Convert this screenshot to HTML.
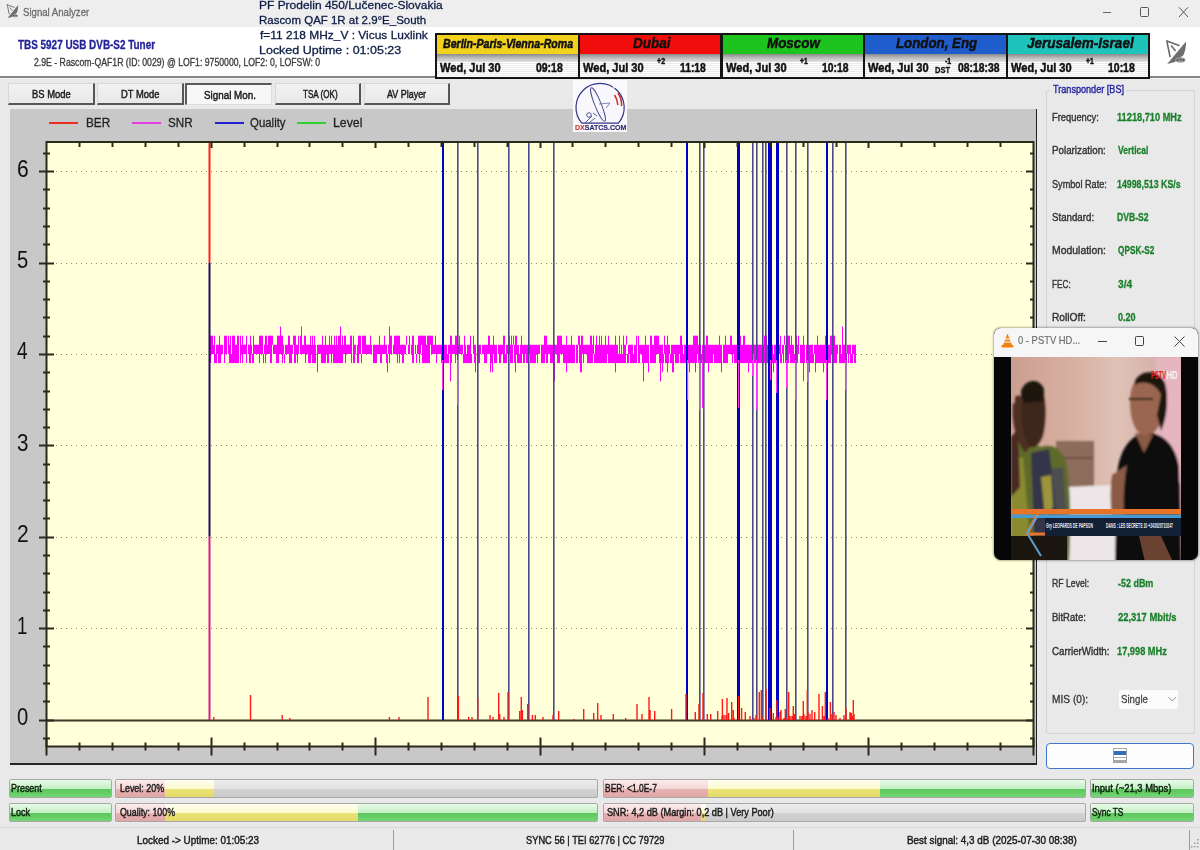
<!DOCTYPE html>
<html><head><meta charset="utf-8"><style>
*{margin:0;padding:0;box-sizing:border-box}
html,body{width:1200px;height:850px;overflow:hidden;background:#e9e9e9;font-family:"Liberation Sans", sans-serif;position:relative}
.t{position:absolute;white-space:nowrap;transform-origin:0 0}
.a{position:absolute}
</style></head><body>

<div class="a" style="left:0;top:0;width:1200px;height:27.5px;background:#eeeeee"></div>
<div class="a" style="left:0;top:27px;width:1200px;height:50px;background:#ffffff"></div>
<div class="a" style="left:0;top:76px;width:1200px;height:2px;background:#858585"></div>
<div class="a" style="left:0;top:78px;width:1200px;height:1px;background:#f6f6f6"></div>
<div class="t" style="left:22.92px;top:6.87px;font-size:11.8px;line-height:11.8px;color:#6a6a6a;font-weight:normal;font-style:normal;transform:scaleX(0.8140);-webkit-text-stroke:0.3px #6a6a6a;">Signal Analyzer</div>
<div class="t" style="left:259.34px;top:-0.43px;font-size:11.8px;line-height:11.8px;color:#0c1c44;font-weight:normal;font-style:normal;transform:scaleX(1.0151);-webkit-text-stroke:0.3px #0c1c44;">PF Prodelin 450/Lučenec-Slovakia</div>
<div class="t" style="left:259.38px;top:14.77px;font-size:11.8px;line-height:11.8px;color:#0c1c44;font-weight:normal;font-style:normal;transform:scaleX(0.9720);-webkit-text-stroke:0.3px #0c1c44;">Rascom QAF 1R at 2.9°E_South</div>
<div class="t" style="left:260.18px;top:29.87px;font-size:11.8px;line-height:11.8px;color:#0c1c44;font-weight:normal;font-style:normal;transform:scaleX(1.0122);-webkit-text-stroke:0.3px #0c1c44;">f=11 218 MHz_V : Vicus Luxlink</div>
<div class="t" style="left:259.30px;top:44.57px;font-size:11.8px;line-height:11.8px;color:#0c1c44;font-weight:normal;font-style:normal;transform:scaleX(1.0580);-webkit-text-stroke:0.3px #0c1c44;">Locked Uptime : 01:05:23</div>
<div class="t" style="left:18.20px;top:39.33px;font-size:12.2px;line-height:12.2px;color:#22229a;font-weight:bold;font-style:normal;transform:scaleX(0.8137);-webkit-text-stroke:0.3px #22229a;">TBS 5927 USB DVB-S2 Tuner</div>
<div class="t" style="left:33.56px;top:57.63px;font-size:10.2px;line-height:10.2px;color:#3a3a3a;font-weight:normal;font-style:normal;transform:scaleX(0.8537);-webkit-text-stroke:0.3px #3a3a3a;">2.9E - Rascom-QAF1R (ID: 0029) @ LOF1: 9750000, LOF2: 0, LOFSW: 0</div>
<div class="a" style="left:10px;top:109px;width:1027px;height:656px;background:#c8c8c8;border-right:1px solid #222;border-bottom:2px solid #262626"></div>
<svg class="a" style="left:0;top:0" width="1200" height="850" viewBox="0 0 1200 850"><rect x="46.5" y="142" width="987.0" height="604.5" fill="#ffffd9"/>
<line x1="56" y1="628.5" x2="1026" y2="628.5" stroke="#8c8c6e" stroke-width="1" stroke-dasharray="1 4"/>
<line x1="56" y1="537.5" x2="1026" y2="537.5" stroke="#8c8c6e" stroke-width="1" stroke-dasharray="1 4"/>
<line x1="56" y1="445.5" x2="1026" y2="445.5" stroke="#8c8c6e" stroke-width="1" stroke-dasharray="1 4"/>
<line x1="56" y1="354.5" x2="1026" y2="354.5" stroke="#8c8c6e" stroke-width="1" stroke-dasharray="1 4"/>
<line x1="56" y1="263.5" x2="1026" y2="263.5" stroke="#8c8c6e" stroke-width="1" stroke-dasharray="1 4"/>
<line x1="56" y1="171.5" x2="1026" y2="171.5" stroke="#8c8c6e" stroke-width="1" stroke-dasharray="1 4"/>
<rect x="46.5" y="719.5" width="987.0" height="2" fill="#3a3a2a"/>
<path d="M210.5 335.7V363.1M211.5 335.7V354.0M212.5 335.7V354.0M213.5 344.8V354.0M214.5 335.7V363.1M215.5 354.0V363.1M216.5 344.8V363.1M217.5 344.8V354.0M218.5 344.8V363.1M219.5 335.7V363.1M220.5 344.8V363.1M221.5 344.8V354.0M222.5 344.8V354.0M223.5 354.0V354.0M224.5 335.7V363.1M225.5 335.7V354.0M226.5 335.7V354.0M227.5 354.0V354.0M228.5 335.7V354.0M229.5 344.8V363.1M230.5 335.7V363.1M231.5 354.0V363.1M232.5 335.7V363.1M233.5 335.7V363.1M234.5 335.7V363.1M235.5 344.8V363.1M236.5 344.8V363.1M237.5 335.7V363.1M238.5 335.7V363.1M239.5 344.8V344.8M240.5 335.7V363.1M241.5 344.8V354.0M242.5 335.7V363.1M243.5 344.8V354.0M244.5 344.8V354.0M245.5 344.8V354.0M246.5 335.7V363.1M247.5 344.8V344.8M248.5 344.8V354.0M249.5 344.8V363.1M250.5 335.7V363.1M251.5 344.8V354.0M252.5 354.0V363.1M253.5 335.7V363.1M254.5 344.8V354.0M255.5 344.8V354.0M256.5 344.8V354.0M257.5 344.8V354.0M258.5 344.8V354.0M259.5 335.7V363.1M260.5 335.7V354.0M261.5 335.7V354.0M262.5 335.7V354.0M263.5 354.0V363.1M264.5 344.8V354.0M265.5 335.7V363.1M266.5 335.7V354.0M267.5 344.8V354.0M268.5 335.7V354.0M269.5 335.7V354.0M270.5 335.7V363.1M271.5 335.7V363.1M272.5 335.7V344.8M273.5 344.8V354.0M274.5 344.8V354.0M275.5 344.8V354.0M276.5 344.8V363.1M277.5 335.7V363.1M278.5 335.7V363.1M279.5 335.7V354.0M280.5 326.6V354.0M281.5 335.7V354.0M282.5 335.7V363.1M283.5 344.8V354.0M284.5 354.0V363.1M285.5 344.8V354.0M286.5 344.8V354.0M287.5 344.8V354.0M288.5 335.7V354.0M289.5 335.7V363.1M290.5 344.8V363.1M291.5 344.8V363.1M292.5 344.8V354.0M293.5 335.7V344.8M294.5 335.7V363.1M295.5 335.7V363.1M296.5 344.8V354.0M297.5 344.8V363.1M298.5 335.7V354.0M299.5 344.8V344.8M300.5 335.7V354.0M301.5 326.6V354.0M302.5 344.8V354.0M303.5 344.8V354.0M304.5 335.7V354.0M305.5 335.7V363.1M306.5 344.8V354.0M307.5 344.8V354.0M308.5 344.8V363.1M309.5 344.8V363.1M310.5 335.7V363.1M311.5 344.8V354.0M312.5 335.7V363.1M313.5 344.8V363.1M314.5 335.7V363.1M315.5 344.8V363.1M316.5 354.0V354.0M317.5 344.8V372.3M318.5 344.8V354.0M319.5 344.8V354.0M320.5 344.8V354.0M321.5 344.8V363.1M322.5 335.7V363.1M323.5 344.8V363.1M324.5 344.8V363.1M325.5 335.7V363.1M326.5 344.8V354.0M327.5 344.8V363.1M328.5 344.8V363.1M329.5 335.7V354.0M330.5 344.8V354.0M331.5 335.7V363.1M332.5 344.8V354.0M333.5 344.8V363.1M334.5 335.7V363.1M335.5 344.8V363.1M336.5 335.7V363.1M337.5 344.8V363.1M338.5 335.7V363.1M339.5 335.7V363.1M340.5 326.6V363.1M341.5 344.8V363.1M342.5 335.7V363.1M343.5 344.8V354.0M344.5 335.7V354.0M345.5 335.7V363.1M346.5 344.8V354.0M347.5 344.8V354.0M348.5 344.8V354.0M349.5 344.8V354.0M350.5 335.7V354.0M351.5 335.7V363.1M352.5 354.0V354.0M353.5 335.7V363.1M354.5 344.8V363.1M355.5 344.8V354.0M356.5 354.0V354.0M357.5 344.8V363.1M358.5 335.7V363.1M359.5 335.7V354.0M360.5 335.7V354.0M361.5 354.0V363.1M362.5 335.7V354.0M363.5 335.7V354.0M364.5 335.7V354.0M365.5 335.7V354.0M366.5 344.8V354.0M367.5 344.8V354.0M368.5 344.8V354.0M369.5 344.8V354.0M370.5 335.7V354.0M371.5 344.8V354.0M372.5 354.0V354.0M373.5 344.8V363.1M374.5 344.8V363.1M375.5 344.8V363.1M376.5 344.8V363.1M377.5 344.8V354.0M378.5 344.8V354.0M379.5 335.7V354.0M380.5 344.8V363.1M381.5 344.8V363.1M382.5 344.8V354.0M383.5 344.8V354.0M384.5 335.7V354.0M385.5 344.8V354.0M386.5 344.8V363.1M387.5 354.0V372.3M388.5 344.8V354.0M389.5 326.6V363.1M390.5 335.7V354.0M391.5 335.7V354.0M392.5 354.0V354.0M393.5 344.8V354.0M394.5 335.7V354.0M395.5 335.7V354.0M396.5 335.7V354.0M397.5 335.7V363.1M398.5 335.7V354.0M399.5 335.7V363.1M400.5 344.8V354.0M401.5 344.8V354.0M402.5 344.8V363.1M403.5 344.8V363.1M404.5 344.8V354.0M405.5 344.8V354.0M406.5 335.7V344.8M407.5 354.0V354.0M408.5 344.8V354.0M409.5 335.7V354.0M410.5 344.8V344.8M411.5 344.8V354.0M412.5 335.7V363.1M413.5 335.7V363.1M414.5 354.0V354.0M415.5 344.8V354.0M416.5 354.0V363.1M417.5 344.8V354.0M418.5 335.7V354.0M419.5 335.7V363.1M420.5 335.7V354.0M421.5 335.7V344.8M422.5 335.7V363.1M423.5 335.7V363.1M424.5 335.7V363.1M425.5 335.7V363.1M426.5 344.8V363.1M427.5 335.7V363.1M428.5 335.7V363.1M429.5 335.7V363.1M430.5 335.7V344.8M431.5 335.7V354.0M432.5 335.7V354.0M433.5 344.8V354.0M434.5 344.8V354.0M435.5 335.7V354.0M436.5 344.8V363.1M437.5 344.8V354.0M438.5 344.8V354.0M439.5 344.8V354.0M440.5 344.8V354.0M441.5 344.8V363.1M442.5 344.8V363.1M443.5 344.8V363.1M444.5 344.8V363.1M445.5 344.8V363.1M446.5 344.8V363.1M447.5 354.0V363.1M448.5 344.8V363.1M449.5 344.8V354.0M450.5 335.7V381.4M451.5 335.7V363.1M452.5 344.8V354.0M453.5 344.8V354.0M454.5 344.8V354.0M455.5 335.7V363.1M456.5 335.7V354.0M457.5 354.0V354.0M458.5 344.8V354.0M459.5 335.7V354.0M460.5 344.8V354.0M461.5 344.8V354.0M462.5 344.8V354.0M463.5 354.0V363.1M464.5 335.7V363.1M465.5 344.8V363.1M466.5 354.0V363.1M467.5 344.8V363.1M468.5 344.8V363.1M469.5 344.8V363.1M470.5 335.7V363.1M471.5 354.0V363.1M472.5 354.0V354.0M473.5 335.7V354.0M474.5 344.8V363.1M475.5 344.8V372.3M476.5 354.0V354.0M477.5 344.8V363.1M478.5 344.8V363.1M479.5 344.8V363.1M480.5 344.8V354.0M481.5 354.0V354.0M482.5 344.8V354.0M483.5 344.8V354.0M484.5 344.8V363.1M485.5 344.8V363.1M486.5 344.8V363.1M487.5 344.8V354.0M488.5 335.7V354.0M489.5 335.7V354.0M490.5 344.8V372.3M491.5 344.8V363.1M492.5 344.8V372.3M493.5 335.7V354.0M494.5 344.8V363.1M495.5 344.8V363.1M496.5 344.8V363.1M497.5 354.0V354.0M498.5 344.8V354.0M499.5 344.8V363.1M500.5 344.8V363.1M501.5 344.8V354.0M502.5 344.8V354.0M503.5 335.7V363.1M504.5 335.7V363.1M505.5 354.0V363.1M506.5 344.8V363.1M507.5 344.8V354.0M508.5 344.8V372.3M509.5 335.7V354.0M510.5 344.8V363.1M511.5 335.7V363.1M512.5 344.8V363.1M513.5 335.7V344.8M514.5 344.8V363.1M515.5 335.7V372.3M516.5 335.7V354.0M517.5 344.8V363.1M518.5 344.8V363.1M519.5 354.0V363.1M520.5 344.8V363.1M521.5 335.7V363.1M522.5 344.8V354.0M523.5 344.8V363.1M524.5 344.8V363.1M525.5 344.8V354.0M526.5 344.8V363.1M527.5 344.8V363.1M528.5 344.8V372.3M529.5 344.8V354.0M530.5 344.8V363.1M531.5 344.8V363.1M532.5 344.8V363.1M533.5 344.8V363.1M534.5 344.8V363.1M535.5 344.8V363.1M536.5 344.8V354.0M537.5 344.8V363.1M538.5 344.8V354.0M539.5 344.8V354.0M540.5 354.0V354.0M541.5 344.8V363.1M542.5 344.8V363.1M543.5 344.8V363.1M544.5 335.7V363.1M545.5 335.7V354.0M546.5 335.7V363.1M547.5 344.8V363.1M548.5 344.8V354.0M549.5 344.8V354.0M550.5 344.8V363.1M551.5 344.8V363.1M552.5 344.8V363.1M553.5 335.7V363.1M554.5 344.8V381.4M555.5 344.8V354.0M556.5 344.8V354.0M557.5 335.7V363.1M558.5 335.7V363.1M559.5 335.7V363.1M560.5 335.7V354.0M561.5 335.7V354.0M562.5 344.8V354.0M563.5 344.8V363.1M564.5 344.8V363.1M565.5 344.8V363.1M566.5 335.7V372.3M567.5 344.8V363.1M568.5 344.8V363.1M569.5 344.8V363.1M570.5 344.8V363.1M571.5 335.7V363.1M572.5 344.8V363.1M573.5 344.8V363.1M574.5 344.8V363.1M575.5 354.0V354.0M576.5 344.8V363.1M577.5 344.8V363.1M578.5 335.7V344.8M579.5 335.7V363.1M580.5 344.8V372.3M581.5 335.7V372.3M582.5 335.7V354.0M583.5 344.8V363.1M584.5 344.8V354.0M585.5 344.8V354.0M586.5 344.8V354.0M587.5 344.8V363.1M588.5 344.8V363.1M589.5 344.8V363.1M590.5 335.7V363.1M591.5 335.7V363.1M592.5 344.8V363.1M593.5 335.7V354.0M594.5 354.0V363.1M595.5 344.8V363.1M596.5 335.7V363.1M597.5 344.8V363.1M598.5 344.8V363.1M599.5 335.7V363.1M600.5 344.8V363.1M601.5 335.7V363.1M602.5 344.8V363.1M603.5 344.8V363.1M604.5 344.8V363.1M605.5 335.7V363.1M606.5 344.8V363.1M607.5 344.8V354.0M608.5 335.7V363.1M609.5 344.8V363.1M610.5 344.8V363.1M611.5 344.8V363.1M612.5 344.8V363.1M613.5 344.8V363.1M614.5 344.8V363.1M615.5 335.7V372.3M616.5 344.8V363.1M617.5 344.8V363.1M618.5 354.0V363.1M619.5 335.7V363.1M620.5 354.0V363.1M621.5 344.8V363.1M622.5 354.0V363.1M623.5 335.7V363.1M624.5 344.8V363.1M625.5 344.8V363.1M626.5 335.7V344.8M627.5 354.0V363.1M628.5 344.8V363.1M629.5 344.8V354.0M630.5 344.8V363.1M631.5 344.8V363.1M632.5 344.8V363.1M633.5 354.0V363.1M634.5 344.8V363.1M635.5 344.8V363.1M636.5 335.7V363.1M637.5 344.8V344.8M638.5 335.7V363.1M639.5 344.8V363.1M640.5 344.8V354.0M641.5 344.8V354.0M642.5 344.8V363.1M643.5 344.8V381.4M644.5 344.8V363.1M645.5 335.7V363.1M646.5 344.8V363.1M647.5 344.8V363.1M648.5 344.8V372.3M649.5 354.0V354.0M650.5 335.7V363.1M651.5 335.7V363.1M652.5 344.8V363.1M653.5 344.8V363.1M654.5 335.7V363.1M655.5 335.7V363.1M656.5 335.7V354.0M657.5 335.7V354.0M658.5 335.7V354.0M659.5 344.8V363.1M660.5 344.8V381.4M661.5 344.8V363.1M662.5 344.8V372.3M663.5 354.0V363.1M664.5 335.7V354.0M665.5 344.8V363.1M666.5 344.8V363.1M667.5 335.7V372.3M668.5 344.8V363.1M669.5 344.8V354.0M670.5 354.0V363.1M671.5 344.8V363.1M672.5 344.8V372.3M673.5 344.8V372.3M674.5 344.8V354.0M675.5 344.8V363.1M676.5 344.8V363.1M677.5 344.8V363.1M678.5 344.8V363.1M679.5 344.8V354.0M680.5 335.7V363.1M681.5 335.7V363.1M682.5 344.8V363.1M683.5 354.0V363.1M684.5 344.8V363.1M685.5 344.8V363.1M686.5 344.8V363.1M687.5 344.8V363.1M688.5 344.8V363.1M689.5 344.8V372.3M690.5 344.8V363.1M691.5 344.8V363.1M692.5 344.8V363.1M693.5 335.7V363.1M694.5 335.7V363.1M695.5 335.7V372.3M696.5 335.7V363.1M697.5 335.7V354.0M698.5 344.8V363.1M699.5 344.8V354.0M700.5 344.8V363.1M701.5 354.0V363.1M702.5 344.8V363.1M703.5 344.8V363.1M704.5 344.8V363.1M705.5 344.8V363.1M706.5 335.7V363.1M707.5 335.7V363.1M708.5 344.8V372.3M709.5 344.8V363.1M710.5 344.8V363.1M711.5 344.8V363.1M712.5 344.8V363.1M713.5 344.8V354.0M714.5 344.8V363.1M715.5 344.8V363.1M716.5 344.8V363.1M717.5 344.8V363.1M718.5 344.8V363.1M719.5 335.7V363.1M720.5 344.8V363.1M721.5 344.8V372.3M722.5 344.8V344.8M723.5 344.8V363.1M724.5 344.8V363.1M725.5 335.7V363.1M726.5 344.8V363.1M727.5 344.8V363.1M728.5 344.8V354.0M729.5 344.8V354.0M730.5 335.7V354.0M731.5 335.7V354.0M732.5 344.8V363.1M733.5 344.8V354.0M734.5 344.8V363.1M735.5 344.8V363.1M736.5 344.8V363.1M737.5 344.8V372.3M738.5 344.8V363.1M739.5 344.8V363.1M740.5 335.7V363.1M741.5 344.8V363.1M742.5 344.8V363.1M743.5 335.7V363.1M744.5 335.7V363.1M745.5 344.8V363.1M746.5 344.8V363.1M747.5 344.8V363.1M748.5 344.8V372.3M749.5 344.8V363.1M750.5 344.8V363.1M751.5 344.8V363.1M752.5 344.8V363.1M753.5 344.8V354.0M754.5 344.8V363.1M755.5 344.8V363.1M756.5 344.8V363.1M757.5 344.8V363.1M758.5 344.8V363.1M759.5 344.8V363.1M760.5 344.8V363.1M761.5 344.8V363.1M762.5 344.8V363.1M763.5 344.8V363.1M764.5 335.7V363.1M765.5 344.8V363.1M766.5 335.7V363.1M767.5 344.8V363.1M768.5 344.8V363.1M769.5 335.7V363.1M770.5 326.6V363.1M771.5 344.8V372.3M772.5 344.8V363.1M773.5 354.0V372.3M774.5 344.8V363.1M775.5 344.8V363.1M776.5 344.8V363.1M777.5 344.8V363.1M778.5 344.8V363.1M779.5 344.8V354.0M780.5 335.7V363.1M781.5 354.0V363.1M782.5 344.8V354.0M783.5 344.8V363.1M784.5 335.7V344.8M785.5 344.8V363.1M786.5 344.8V372.3M787.5 335.7V363.1M788.5 335.7V363.1M789.5 335.7V354.0M790.5 344.8V363.1M791.5 335.7V363.1M792.5 344.8V363.1M793.5 344.8V363.1M794.5 354.0V363.1M795.5 344.8V363.1M796.5 335.7V363.1M797.5 344.8V363.1M798.5 335.7V354.0M799.5 344.8V344.8M800.5 344.8V363.1M801.5 344.8V363.1M802.5 344.8V363.1M803.5 335.7V381.4M804.5 344.8V363.1M805.5 344.8V344.8M806.5 344.8V363.1M807.5 344.8V363.1M808.5 344.8V363.1M809.5 344.8V372.3M810.5 344.8V363.1M811.5 344.8V363.1M812.5 344.8V363.1M813.5 354.0V363.1M814.5 344.8V354.0M815.5 344.8V372.3M816.5 344.8V363.1M817.5 335.7V363.1M818.5 344.8V363.1M819.5 344.8V363.1M820.5 344.8V363.1M821.5 344.8V363.1M822.5 344.8V363.1M823.5 344.8V372.3M824.5 344.8V363.1M825.5 335.7V363.1M826.5 335.7V363.1M827.5 335.7V363.1M828.5 344.8V363.1M829.5 344.8V363.1M830.5 335.7V363.1M831.5 335.7V354.0M832.5 335.7V363.1M833.5 335.7V363.1M834.5 335.7V363.1M835.5 344.8V363.1M836.5 344.8V363.1M837.5 344.8V354.0M838.5 344.8V344.8M839.5 344.8V363.1M840.5 344.8V363.1M841.5 354.0V363.1M842.5 326.6V363.1M843.5 344.8V363.1M844.5 344.8V363.1M845.5 344.8V363.1M846.5 354.0V363.1M847.5 344.8V354.0M848.5 344.8V363.1M849.5 344.8V354.0M850.5 344.8V363.1M851.5 354.0V363.1M852.5 344.8V363.1M853.5 344.8V354.0M854.5 344.8V363.1M855.5 344.8V363.1" stroke="#ff00ff" stroke-width="1" fill="none"/>
<rect x="442" y="142" width="2" height="578" fill="#0000c8"/>
<rect x="457" y="142" width="1.6" height="578" fill="#4a4a8c"/>
<rect x="477" y="142" width="1.6" height="578" fill="#4a4a8c"/>
<rect x="508" y="142" width="1.6" height="578" fill="#4a4a8c"/>
<rect x="528" y="142" width="1.6" height="578" fill="#4a4a8c"/>
<rect x="553" y="142" width="1.6" height="578" fill="#4a4a8c"/>
<rect x="686" y="142" width="2" height="578" fill="#0000c8"/>
<rect x="699" y="142" width="1.6" height="578" fill="#4a4a8c"/>
<rect x="703" y="142" width="1.6" height="578" fill="#4a4a8c"/>
<rect x="737" y="142" width="3" height="578" fill="#0000c8"/>
<rect x="752" y="142" width="1.6" height="578" fill="#4a4a8c"/>
<rect x="756" y="142" width="1.6" height="578" fill="#4a4a8c"/>
<rect x="762" y="142" width="1.6" height="578" fill="#4a4a8c"/>
<rect x="765" y="142" width="1.6" height="578" fill="#4a4a8c"/>
<rect x="768" y="142" width="4" height="578" fill="#0000c8"/>
<rect x="776" y="142" width="3" height="578" fill="#0000c8"/>
<rect x="786" y="142" width="1.6" height="578" fill="#4a4a8c"/>
<rect x="795" y="142" width="1.6" height="578" fill="#4a4a8c"/>
<rect x="807" y="142" width="1.6" height="578" fill="#4a4a8c"/>
<rect x="826" y="142" width="2" height="578" fill="#0000c8"/>
<rect x="832" y="142" width="1.6" height="578" fill="#4a4a8c"/>
<rect x="845" y="142" width="1.6" height="578" fill="#4a4a8c"/>
<rect x="442" y="360" width="1.2" height="30" fill="#ff30ff"/>
<rect x="457" y="360" width="1.2" height="45" fill="#ff30ff"/>
<rect x="687" y="360" width="1.2" height="40" fill="#ff30ff"/>
<rect x="699" y="360" width="1.2" height="50" fill="#ff30ff"/>
<rect x="702" y="360" width="1.2" height="48" fill="#ff30ff"/>
<rect x="738" y="360" width="1.2" height="48" fill="#ff30ff"/>
<rect x="752" y="360" width="1.2" height="16" fill="#ff30ff"/>
<rect x="756" y="360" width="1.2" height="50" fill="#ff30ff"/>
<rect x="770" y="360" width="1.2" height="20" fill="#ff30ff"/>
<rect x="776" y="360" width="1.2" height="33" fill="#ff30ff"/>
<rect x="786" y="360" width="1.2" height="28" fill="#ff30ff"/>
<rect x="795" y="360" width="1.2" height="40" fill="#ff30ff"/>
<rect x="807" y="360" width="1.2" height="22" fill="#ff30ff"/>
<rect x="826" y="360" width="1.2" height="40" fill="#ff30ff"/>
<rect x="845" y="360" width="1.2" height="30" fill="#ff30ff"/>
<path d="M213.8 720V717M250.5 720V695M282.2 720V715M290.0 720V718M389.4 720V717M399.0 720V717M428.0 720V697M458.4 720V696M468.7 720V717M472.0 720V717M477.7 720V698M490.0 720V715M493.0 720V717M498.7 720V693M499.7 720V714M504.0 720V717M508.0 720V692M519.7 720V711M521.3 720V697M522.4 720V710M527.7 720V704M532.4 720V715M535.3 720V715M543.0 720V717M553.0 720V715M558.7 720V711M574.0 720V719M583.7 720V709M593.7 720V713M597.7 720V703M601.0 720V715M613.3 720V714M625.7 720V718M637.0 720V704M642.0 720V714M649.0 720V697M650.0 720V710M654.7 720V711M671.6 720V709M686.0 720V694M695.3 720V712M699.0 720V704M703.0 720V693M707.3 720V714M710.7 720V714M717.7 720V711M722.4 720V699M727.0 720V698M728.7 720V713M731.7 720V702M733.3 720V710M738.7 720V696M741.6 720V708M745.3 720V712M756.0 720V715M759.3 720V692M761.3 720V690M766.0 720V689M770.0 720V708M773.3 720V713M777.0 720V700M781.0 720V710M785.3 720V709M788.7 720V692M793.3 720V706M794.4 720V714M800.0 720V716M803.3 720V701M807.3 720V690M812.0 720V710M814.7 720V712M819.0 720V694M822.4 720V706M825.3 720V692M830.4 720V702M846.0 720V708M851.3 720V713M853.3 720V700M722 720V716M724 720V715M726 720V715M734 720V718M750 720V716M754 720V718M762 720V717M766 720V715M770 720V718M776 720V717M778 720V717M780 720V712M784 720V718M786 720V718M790 720V716M792 720V716M794 720V715M800 720V718M802 720V716M804 720V714M806 720V716M808 720V712M810 720V714M812 720V717M824 720V716M828 720V718M832 720V714M834 720V712M836 720V715M840 720V718M844 720V715M846 720V717M850 720V712M852 720V716M854 720V714" stroke="#ff1a1a" stroke-width="1.4" fill="none"/>
<rect x="208.5" y="142" width="2" height="120.6" fill="#ff2020"/>
<rect x="208.5" y="262.6" width="2" height="274.1" fill="#20105a"/>
<rect x="208.5" y="536.7" width="2" height="183.3" fill="#d81a8a"/>
<path d="M46.5 142H1033.5V746.5H46.5Z" stroke="#2a2a1a" stroke-width="2" fill="none"/>
<path d="M46.5 737.5V755.5M79.5 142V147M79.5 742.5V750.5M112.5 142V147M112.5 742.5V750.5M145.5 142V147M145.5 742.5V750.5M178.5 142V147M178.5 742.5V750.5M211.5 142V148M211.5 737.5V755.5M244.5 142V147M244.5 742.5V750.5M277.5 142V147M277.5 742.5V750.5M309.5 142V147M309.5 742.5V750.5M342.5 142V147M342.5 742.5V750.5M375.5 142V148M375.5 737.5V755.5M408.5 142V147M408.5 742.5V750.5M441.5 142V147M441.5 742.5V750.5M474.5 142V147M474.5 742.5V750.5M507.5 142V147M507.5 742.5V750.5M540.5 142V148M540.5 737.5V755.5M572.5 142V147M572.5 742.5V750.5M605.5 142V147M605.5 742.5V750.5M638.5 142V147M638.5 742.5V750.5M671.5 142V147M671.5 742.5V750.5M704.5 142V148M704.5 737.5V755.5M737.5 142V147M737.5 742.5V750.5M770.5 142V147M770.5 742.5V750.5M803.5 142V147M803.5 742.5V750.5M836.5 142V147M836.5 742.5V750.5M868.5 142V148M868.5 737.5V755.5M901.5 142V147M901.5 742.5V750.5M934.5 142V147M934.5 742.5V750.5M967.5 142V147M967.5 742.5V750.5M1000.5 142V147M1000.5 742.5V750.5M1033.5 737.5V755.5M43 738.5H50M1030 738.5H1033.5M39 720.5H54M1026 720.5H1033.5M43 701.5H50M1030 701.5H1033.5M43 683.5H50M1030 683.5H1033.5M43 665.5H50M1030 665.5H1033.5M43 646.5H50M1030 646.5H1033.5M39 628.5H54M1026 628.5H1033.5M43 610.5H50M1030 610.5H1033.5M43 592.5H50M1030 592.5H1033.5M43 573.5H50M1030 573.5H1033.5M43 555.5H50M1030 555.5H1033.5M39 537.5H54M1026 537.5H1033.5M43 518.5H50M1030 518.5H1033.5M43 500.5H50M1030 500.5H1033.5M43 482.5H50M1030 482.5H1033.5M43 464.5H50M1030 464.5H1033.5M39 445.5H54M1026 445.5H1033.5M43 427.5H50M1030 427.5H1033.5M43 409.5H50M1030 409.5H1033.5M43 391.5H50M1030 391.5H1033.5M43 372.5H50M1030 372.5H1033.5M39 354.5H54M1026 354.5H1033.5M43 336.5H50M1030 336.5H1033.5M43 317.5H50M1030 317.5H1033.5M43 299.5H50M1030 299.5H1033.5M43 281.5H50M1030 281.5H1033.5M39 263.5H54M1026 263.5H1033.5M43 244.5H50M1030 244.5H1033.5M43 226.5H50M1030 226.5H1033.5M43 208.5H50M1030 208.5H1033.5M43 189.5H50M1030 189.5H1033.5M39 171.5H54M1026 171.5H1033.5M43 153.5H50M1030 153.5H1033.5" stroke="#2a2a1a" stroke-width="2" fill="none"/></svg>
<div class="a" style="left:1102.5px;top:11.5px;width:8px;height:1.2px;background:#666"></div>
<div class="a" style="left:1140px;top:7.3px;width:8.7px;height:9.7px;border:1px solid #555;border-radius:1.5px"></div>
<svg class="a" style="left:1178px;top:6px" width="12" height="12"><path d="M1 1.3L10 11M10 1.3L1 11" stroke="#555" stroke-width="1"/></svg>
<svg class="a" style="left:0;top:0" width="30" height="27" viewBox="0 0 30 27"><g transform="translate(3.4 2.0) scale(0.57)"><g fill="none" stroke="#6a6a6a" stroke-linecap="round"><path d="M6.8 4.9L19 9.4M6.8 4.9L10 20.5M11.5 10.1L15.2 14.4" stroke-width="1.6"/></g><path d="M26 5.4C26.2 11 25 16 23.2 19.5C21 21 17 23.5 14.8 26.1L7.2 28Z" fill="#6e6e6e"/><ellipse cx="20.3" cy="24" rx="5.2" ry="2.7" fill="#9a9a9a"/><circle cx="17.5" cy="24" r="1.1" fill="#555"/><circle cx="20.5" cy="23.6" r="1.1" fill="#555"/><circle cx="23.3" cy="24" r="1.1" fill="#555"/></g></svg>
<div class="a" style="left:8.4px;top:83px;width:86.6px;height:21.5px;background:linear-gradient(#f2f2f2,#e8e8e8);border-top:1px solid #d8d8d8;border-left:1px solid #d8d8d8;border-right:2px solid #555;border-bottom:2px solid #555"></div>
<div class="t" style="left:31.65px;top:88.82px;font-size:10.8px;line-height:10.8px;color:#1a1a1a;font-weight:normal;font-style:normal;transform:scaleX(0.8726);-webkit-text-stroke:0.45px #1a1a1a;">BS Mode</div>
<div class="a" style="left:97.4px;top:83px;width:86.6px;height:21.5px;background:linear-gradient(#f2f2f2,#e8e8e8);border-top:1px solid #d8d8d8;border-left:1px solid #d8d8d8;border-right:2px solid #555;border-bottom:2px solid #555"></div>
<div class="t" style="left:120.65px;top:88.82px;font-size:10.8px;line-height:10.8px;color:#1a1a1a;font-weight:normal;font-style:normal;transform:scaleX(0.8676);-webkit-text-stroke:0.45px #1a1a1a;">DT Mode</div>
<div class="a" style="left:185.1px;top:83px;width:86.6px;height:21.5px;background:#f7f7f7;border-top:2px solid #5a5a5a;border-left:2px solid #5a5a5a;border-right:1px solid #ddd;border-bottom:1px solid #ddd"></div>
<div class="t" style="left:204.01px;top:89.82px;font-size:10.8px;line-height:10.8px;color:#1a1a1a;font-weight:normal;font-style:normal;transform:scaleX(0.9115);-webkit-text-stroke:0.45px #1a1a1a;">Signal Mon.</div>
<div class="a" style="left:274.5px;top:83px;width:86.6px;height:21.5px;background:linear-gradient(#f2f2f2,#e8e8e8);border-top:1px solid #d8d8d8;border-left:1px solid #d8d8d8;border-right:2px solid #555;border-bottom:2px solid #555"></div>
<div class="t" style="left:302.84px;top:88.82px;font-size:10.8px;line-height:10.8px;color:#1a1a1a;font-weight:normal;font-style:normal;transform:scaleX(0.7496);-webkit-text-stroke:0.45px #1a1a1a;">TSA (OK)</div>
<div class="a" style="left:363.6px;top:83px;width:86.6px;height:21.5px;background:linear-gradient(#f2f2f2,#e8e8e8);border-top:1px solid #d8d8d8;border-left:1px solid #d8d8d8;border-right:2px solid #555;border-bottom:2px solid #555"></div>
<div class="t" style="left:387.20px;top:88.82px;font-size:10.8px;line-height:10.8px;color:#1a1a1a;font-weight:normal;font-style:normal;transform:scaleX(0.8282);-webkit-text-stroke:0.45px #1a1a1a;">AV Player</div>
<div class="a" style="left:435.3px;top:33px;width:715px;height:45.5px;background:#141414"></div>
<div class="a" style="left:437.3px;top:35px;width:140.6px;height:19px;background:#f2d21c"></div>
<div class="a" style="left:437.3px;top:54px;width:140.6px;height:22.8px;background:linear-gradient(#8a8a8a 0px,#bdbdbd 4px,#e2e2e2 8px,#f4f4f4 10px),#fff"></div>
<div class="a" style="left:437.3px;top:62px;width:140.6px;height:14.8px;background:repeating-linear-gradient(#ffffff 0 1px,#eaeaea 1px 2px)"></div>
<div class="t" style="left:443.09px;top:38.38px;font-size:12.2px;line-height:12.2px;color:#111;font-weight:bold;font-style:italic;transform:scaleX(0.8678);-webkit-text-stroke:0.5px #111;">Berlin-Paris-Vienna-Roma</div>
<div class="t" style="left:440.00px;top:61.29px;font-size:13.3px;line-height:13.3px;color:#111;font-weight:bold;font-style:normal;transform:scaleX(0.8319);-webkit-text-stroke:0.5px #111;">Wed, Jul 30</div>
<div class="t" style="left:536.28px;top:61.29px;font-size:13.3px;line-height:13.3px;color:#111;font-weight:bold;font-style:normal;transform:scaleX(0.7851);-webkit-text-stroke:0.5px #111;">09:18</div>
<div class="a" style="left:579.9px;top:35px;width:140.6px;height:19px;background:#f20d0d"></div>
<div class="a" style="left:579.9px;top:54px;width:140.6px;height:22.8px;background:linear-gradient(#8a8a8a 0px,#bdbdbd 4px,#e2e2e2 8px,#f4f4f4 10px),#fff"></div>
<div class="a" style="left:579.9px;top:62px;width:140.6px;height:14.8px;background:repeating-linear-gradient(#ffffff 0 1px,#eaeaea 1px 2px)"></div>
<div class="t" style="left:633.48px;top:36.17px;font-size:14.8px;line-height:14.8px;color:#111;font-weight:bold;font-style:italic;transform:scaleX(0.9114);-webkit-text-stroke:0.5px #111;">Dubai</div>
<div class="t" style="left:582.90px;top:61.29px;font-size:13.3px;line-height:13.3px;color:#111;font-weight:bold;font-style:normal;transform:scaleX(0.8319);-webkit-text-stroke:0.5px #111;">Wed, Jul 30</div>
<div class="t" style="left:679.98px;top:61.29px;font-size:13.3px;line-height:13.3px;color:#111;font-weight:bold;font-style:normal;transform:scaleX(0.7767);-webkit-text-stroke:0.5px #111;">11:18</div>
<div class="t" style="left:657.22px;top:56.84px;font-size:8.3px;line-height:8.3px;color:#111;font-weight:bold;font-style:normal;transform:scaleX(0.8525);-webkit-text-stroke:0.45px #111;">+2</div>
<div class="a" style="left:722.5px;top:35px;width:140.6px;height:19px;background:#1ec41e"></div>
<div class="a" style="left:722.5px;top:54px;width:140.6px;height:22.8px;background:linear-gradient(#8a8a8a 0px,#bdbdbd 4px,#e2e2e2 8px,#f4f4f4 10px),#fff"></div>
<div class="a" style="left:722.5px;top:62px;width:140.6px;height:14.8px;background:repeating-linear-gradient(#ffffff 0 1px,#eaeaea 1px 2px)"></div>
<div class="t" style="left:767.48px;top:36.17px;font-size:14.8px;line-height:14.8px;color:#111;font-weight:bold;font-style:italic;transform:scaleX(0.9057);-webkit-text-stroke:0.5px #111;">Moscow</div>
<div class="t" style="left:725.50px;top:61.29px;font-size:13.3px;line-height:13.3px;color:#111;font-weight:bold;font-style:normal;transform:scaleX(0.8319);-webkit-text-stroke:0.5px #111;">Wed, Jul 30</div>
<div class="t" style="left:822.38px;top:61.29px;font-size:13.3px;line-height:13.3px;color:#111;font-weight:bold;font-style:normal;transform:scaleX(0.7793);-webkit-text-stroke:0.5px #111;">10:18</div>
<div class="t" style="left:800.23px;top:56.84px;font-size:8.3px;line-height:8.3px;color:#111;font-weight:bold;font-style:normal;transform:scaleX(0.8163);-webkit-text-stroke:0.45px #111;">+1</div>
<div class="a" style="left:865.1px;top:35px;width:140.6px;height:19px;background:#1f5ccc"></div>
<div class="a" style="left:865.1px;top:54px;width:140.6px;height:22.8px;background:linear-gradient(#8a8a8a 0px,#bdbdbd 4px,#e2e2e2 8px,#f4f4f4 10px),#fff"></div>
<div class="a" style="left:865.1px;top:62px;width:140.6px;height:14.8px;background:repeating-linear-gradient(#ffffff 0 1px,#eaeaea 1px 2px)"></div>
<div class="t" style="left:896.33px;top:36.17px;font-size:14.8px;line-height:14.8px;color:#111;font-weight:bold;font-style:italic;transform:scaleX(0.8977);-webkit-text-stroke:0.5px #111;">London, Eng</div>
<div class="t" style="left:868.10px;top:61.29px;font-size:13.3px;line-height:13.3px;color:#111;font-weight:bold;font-style:normal;transform:scaleX(0.8319);-webkit-text-stroke:0.5px #111;">Wed, Jul 30</div>
<div class="t" style="left:957.84px;top:61.29px;font-size:13.3px;line-height:13.3px;color:#111;font-weight:bold;font-style:normal;transform:scaleX(0.7796);-webkit-text-stroke:0.5px #111;">08:18:38</div>
<div class="t" style="left:944.72px;top:56.84px;font-size:8.3px;line-height:8.3px;color:#111;font-weight:bold;font-style:normal;transform:scaleX(0.8448);-webkit-text-stroke:0.45px #111;">-1</div>
<div class="t" style="left:935.48px;top:65.11px;font-size:9.4px;line-height:9.4px;color:#111;font-weight:bold;font-style:normal;transform:scaleX(0.7979);-webkit-text-stroke:0.3px #111;">DST</div>
<div class="a" style="left:1007.7px;top:35px;width:140.6px;height:19px;background:#1ec4bc"></div>
<div class="a" style="left:1007.7px;top:54px;width:140.6px;height:22.8px;background:linear-gradient(#8a8a8a 0px,#bdbdbd 4px,#e2e2e2 8px,#f4f4f4 10px),#fff"></div>
<div class="a" style="left:1007.7px;top:62px;width:140.6px;height:14.8px;background:repeating-linear-gradient(#ffffff 0 1px,#eaeaea 1px 2px)"></div>
<div class="t" style="left:1026.96px;top:36.17px;font-size:14.8px;line-height:14.8px;color:#111;font-weight:bold;font-style:italic;transform:scaleX(0.9131);-webkit-text-stroke:0.5px #111;">Jerusalem-Israel</div>
<div class="t" style="left:1010.70px;top:61.29px;font-size:13.3px;line-height:13.3px;color:#111;font-weight:bold;font-style:normal;transform:scaleX(0.8319);-webkit-text-stroke:0.5px #111;">Wed, Jul 30</div>
<div class="t" style="left:1108.12px;top:61.29px;font-size:13.3px;line-height:13.3px;color:#111;font-weight:bold;font-style:normal;transform:scaleX(0.7869);-webkit-text-stroke:0.5px #111;">10:18</div>
<div class="t" style="left:1086.23px;top:56.84px;font-size:8.3px;line-height:8.3px;color:#111;font-weight:bold;font-style:normal;transform:scaleX(0.8163);-webkit-text-stroke:0.45px #111;">+1</div>
<svg class="a" style="left:1160px;top:36px" width="32" height="32" viewBox="0 0 32 32"><g fill="none" stroke="#6a6a6a" stroke-linecap="round"><path d="M6.8 4.9L19 9.4M6.8 4.9L10 20.5M11.5 10.1L15.2 14.4" stroke-width="1.6"/></g><path d="M26 5.4C26.2 11 25 16 23.2 19.5C21 21 17 23.5 14.8 26.1L7.2 28Z" fill="#6e6e6e"/><ellipse cx="20.3" cy="24" rx="5.2" ry="2.7" fill="#9a9a9a"/><circle cx="17.5" cy="24" r="1.1" fill="#555"/><circle cx="20.5" cy="23.6" r="1.1" fill="#555"/><circle cx="23.3" cy="24" r="1.1" fill="#555"/></svg>
<div class="a" style="left:573px;top:80px;width:54px;height:52px;background:#fafafc"></div>
<svg class="a" style="left:573px;top:80px" width="54" height="52" viewBox="0 0 54 52"><path d="M8.8 43.2A24.1 24.1 0 1 1 45.4 43.2Z" stroke="#34348a" stroke-width="1.2" fill="#f8f8fc"/><rect x="40" y="5" width="3" height="3" fill="#f8f8fc" transform="rotate(35 41.5 6.5)"/><path d="M45 13A21.5 21.5 0 0 1 48.6 26" stroke="#c83232" stroke-width="1.6" fill="none"/><path d="M41.5 15A18 18 0 0 1 44.8 25" stroke="#c83232" stroke-width="1.6" fill="none"/><ellipse cx="25" cy="24.5" rx="3.2" ry="18" transform="rotate(-22 25 24.5)" stroke="#4a4a90" stroke-width="0.9" fill="none"/><path d="M26 24L37 23L33 28" stroke="#6a6aa0" stroke-width="0.8" fill="none"/><circle cx="16" cy="35" r="2.3" stroke="#4a4a90" stroke-width="0.9" fill="none"/><path d="M12 43L19 36M16 43L22 38M20 33L24 36" stroke="#4a4a90" stroke-width="0.9" fill="none"/></svg>
<div class="t" style="left:574.81px;top:123.71px;font-size:7.4px;line-height:7.4px;color:#2a2a6e;font-weight:bold;font-style:normal;transform:scaleX(0.9495);-webkit-text-stroke:0.15px #2a2a6e;"><span style="color:#c43a3a;-webkit-text-stroke-color:#c43a3a">DX</span>SATCS.COM</div>
<div class="a" style="left:49px;top:122px;width:29px;height:2px;background:#e83020"></div>
<div class="t" style="left:85.81px;top:116.04px;font-size:13.6px;line-height:13.6px;color:#222;font-weight:normal;font-style:normal;transform:scaleX(0.8674);-webkit-text-stroke:0.3px #222;">BER</div>
<div class="a" style="left:132px;top:122px;width:29px;height:2px;background:#e040e0"></div>
<div class="t" style="left:168.42px;top:116.04px;font-size:13.6px;line-height:13.6px;color:#222;font-weight:normal;font-style:normal;transform:scaleX(0.8560);-webkit-text-stroke:0.3px #222;">SNR</div>
<div class="a" style="left:215px;top:122px;width:29px;height:2px;background:#2020d0"></div>
<div class="t" style="left:250.43px;top:116.04px;font-size:13.6px;line-height:13.6px;color:#222;font-weight:normal;font-style:normal;transform:scaleX(0.8410);-webkit-text-stroke:0.3px #222;">Quality</div>
<div class="a" style="left:296.5px;top:122px;width:29px;height:2px;background:#30d030"></div>
<div class="t" style="left:332.82px;top:116.04px;font-size:13.6px;line-height:13.6px;color:#222;font-weight:normal;font-style:normal;transform:scaleX(0.9052);-webkit-text-stroke:0.3px #222;">Level</div>
<div class="t" style="left:16.89px;top:705.92px;font-size:23.5px;line-height:23.5px;color:#111;font-weight:normal;font-style:normal;transform:scaleX(0.8599);">0</div>
<div class="t" style="left:16.51px;top:614.54px;font-size:23.5px;line-height:23.5px;color:#111;font-weight:normal;font-style:normal;transform:scaleX(0.7917);">1</div>
<div class="t" style="left:16.65px;top:523.16px;font-size:23.5px;line-height:23.5px;color:#111;font-weight:normal;font-style:normal;transform:scaleX(0.8973);">2</div>
<div class="t" style="left:16.87px;top:431.78px;font-size:23.5px;line-height:23.5px;color:#111;font-weight:normal;font-style:normal;transform:scaleX(0.8782);">3</div>
<div class="t" style="left:17.32px;top:340.40px;font-size:23.5px;line-height:23.5px;color:#111;font-weight:normal;font-style:normal;transform:scaleX(0.8093);">4</div>
<div class="t" style="left:16.89px;top:249.03px;font-size:23.5px;line-height:23.5px;color:#111;font-weight:normal;font-style:normal;transform:scaleX(0.8599);">5</div>
<div class="t" style="left:16.65px;top:157.65px;font-size:23.5px;line-height:23.5px;color:#111;font-weight:normal;font-style:normal;transform:scaleX(0.8973);">6</div>
<div class="a" style="left:1045.5px;top:90px;width:149px;height:644px;border:1px solid #d4d4d4;border-radius:2px"></div>
<div class="a" style="left:1050px;top:83px;width:76px;height:14px;background:#e9e9e9"></div>
<div class="t" style="left:1052.62px;top:84.49px;font-size:11.3px;line-height:11.3px;color:#2424a0;font-weight:normal;font-style:normal;transform:scaleX(0.8058);-webkit-text-stroke:0.4px #2424a0;">Transponder [BS]</div>
<div class="t" style="left:1052.05px;top:112.18px;font-size:11.2px;line-height:11.2px;color:#333;font-weight:normal;font-style:normal;transform:scaleX(0.8356);-webkit-text-stroke:0.4px #333;">Frequency:</div>
<div class="t" style="left:1117.45px;top:112.18px;font-size:11.2px;line-height:11.2px;color:#1a7f2a;font-weight:bold;font-style:normal;transform:scaleX(0.8243);-webkit-text-stroke:0.3px #1a7f2a;">11218,710 MHz</div>
<div class="t" style="left:1052.02px;top:145.38px;font-size:11.2px;line-height:11.2px;color:#333;font-weight:normal;font-style:normal;transform:scaleX(0.8744);-webkit-text-stroke:0.4px #333;">Polarization:</div>
<div class="t" style="left:1117.91px;top:145.38px;font-size:11.2px;line-height:11.2px;color:#1a7f2a;font-weight:bold;font-style:normal;transform:scaleX(0.7646);-webkit-text-stroke:0.3px #1a7f2a;">Vertical</div>
<div class="t" style="left:1052.34px;top:178.98px;font-size:11.2px;line-height:11.2px;color:#333;font-weight:normal;font-style:normal;transform:scaleX(0.8167);-webkit-text-stroke:0.4px #333;">Symbol Rate:</div>
<div class="t" style="left:1117.47px;top:178.98px;font-size:11.2px;line-height:11.2px;color:#1a7f2a;font-weight:bold;font-style:normal;transform:scaleX(0.7877);-webkit-text-stroke:0.3px #1a7f2a;">14998,513 KS/s</div>
<div class="t" style="left:1052.31px;top:212.38px;font-size:11.2px;line-height:11.2px;color:#333;font-weight:normal;font-style:normal;transform:scaleX(0.8673);-webkit-text-stroke:0.4px #333;">Standard:</div>
<div class="t" style="left:1117.40px;top:212.38px;font-size:11.2px;line-height:11.2px;color:#1a7f2a;font-weight:bold;font-style:normal;transform:scaleX(0.7700);-webkit-text-stroke:0.3px #1a7f2a;">DVB-S2</div>
<div class="t" style="left:1051.96px;top:245.18px;font-size:11.2px;line-height:11.2px;color:#333;font-weight:normal;font-style:normal;transform:scaleX(0.9321);-webkit-text-stroke:0.4px #333;">Modulation:</div>
<div class="t" style="left:1117.67px;top:245.18px;font-size:11.2px;line-height:11.2px;color:#1a7f2a;font-weight:bold;font-style:normal;transform:scaleX(0.7375);-webkit-text-stroke:0.3px #1a7f2a;">QPSK-S2</div>
<div class="t" style="left:1052.14px;top:278.88px;font-size:11.2px;line-height:11.2px;color:#333;font-weight:normal;font-style:normal;transform:scaleX(0.7363);-webkit-text-stroke:0.4px #333;">FEC:</div>
<div class="t" style="left:1117.80px;top:278.88px;font-size:11.2px;line-height:11.2px;color:#1a7f2a;font-weight:bold;font-style:normal;transform:scaleX(0.9060);-webkit-text-stroke:0.3px #1a7f2a;">3/4</div>
<div class="t" style="left:1051.98px;top:312.08px;font-size:11.2px;line-height:11.2px;color:#333;font-weight:normal;font-style:normal;transform:scaleX(0.9127);-webkit-text-stroke:0.4px #333;">RollOff:</div>
<div class="t" style="left:1117.64px;top:312.08px;font-size:11.2px;line-height:11.2px;color:#1a7f2a;font-weight:bold;font-style:normal;transform:scaleX(0.8069);-webkit-text-stroke:0.3px #1a7f2a;">0.20</div>
<div class="t" style="left:1052.11px;top:578.38px;font-size:11.2px;line-height:11.2px;color:#333;font-weight:normal;font-style:normal;transform:scaleX(0.7755);-webkit-text-stroke:0.4px #333;">RF Level:</div>
<div class="t" style="left:1117.64px;top:578.38px;font-size:11.2px;line-height:11.2px;color:#1a7f2a;font-weight:bold;font-style:normal;transform:scaleX(0.8001);-webkit-text-stroke:0.3px #1a7f2a;">-52 dBm</div>
<div class="t" style="left:1052.04px;top:612.48px;font-size:11.2px;line-height:11.2px;color:#333;font-weight:normal;font-style:normal;transform:scaleX(0.8507);-webkit-text-stroke:0.4px #333;">BitRate:</div>
<div class="t" style="left:1117.72px;top:612.48px;font-size:11.2px;line-height:11.2px;color:#1a7f2a;font-weight:bold;font-style:normal;transform:scaleX(0.8407);-webkit-text-stroke:0.3px #1a7f2a;">22,317 Mbit/s</div>
<div class="t" style="left:1052.31px;top:645.78px;font-size:11.2px;line-height:11.2px;color:#333;font-weight:normal;font-style:normal;transform:scaleX(0.8727);-webkit-text-stroke:0.4px #333;">CarrierWidth:</div>
<div class="t" style="left:1117.44px;top:645.78px;font-size:11.2px;line-height:11.2px;color:#1a7f2a;font-weight:bold;font-style:normal;transform:scaleX(0.8270);-webkit-text-stroke:0.3px #1a7f2a;">17,998 MHz</div>
<div class="t" style="left:1052.39px;top:694.48px;font-size:11.2px;line-height:11.2px;color:#333;font-weight:normal;font-style:normal;transform:scaleX(0.9087);-webkit-text-stroke:0.3px #333;">MIS (0):</div>
<div class="a" style="left:1118.5px;top:690px;width:59.5px;height:18.5px;background:#fbfbfb;border-radius:2px"></div>
<div class="t" style="left:1120.51px;top:694.48px;font-size:11.2px;line-height:11.2px;color:#444;font-weight:normal;font-style:normal;transform:scaleX(0.8662);-webkit-text-stroke:0.3px #444;">Single</div>
<svg class="a" style="left:1167.5px;top:696px" width="9" height="7"><path d="M0.5 1L4.25 5L8 1" stroke="#999" fill="none" stroke-width="1"/></svg>
<div class="a" style="left:1046px;top:743px;width:148px;height:25.5px;background:#fdfdfd;border:1.5px solid #3f78c8;border-radius:4px"></div>
<div class="a" style="left:1113px;top:748px;width:14px;height:15px;border:1px solid #a4a4a4;background:linear-gradient(#fff 0 2.5px,#2f6fc0 2.5px 6px,#fff 6px 8px,#a8a8a8 8px 9.5px,#fff 9.5px 11px,#a8a8a8 11px 13px)"></div>
<div class="a" style="left:994px;top:327.5px;width:204px;height:232.5px;background:#060606;border-radius:7px;box-shadow:0 0 2px 1px rgba(0,0,0,0.3);overflow:hidden"><div class="a" style="left:0;top:0;width:204px;height:29px;background:#f6f6f6"></div><svg class="a" style="left:17px;top:29px" width="170" height="205" viewBox="0 0 170 205"><defs><linearGradient id="wall" x1="0" x2="1" y1="0" y2="0"><stop offset="0" stop-color="#cc9e90"/><stop offset="0.4" stop-color="#d8b2a4"/><stop offset="0.62" stop-color="#dfc2b6"/><stop offset="0.85" stop-color="#d6b2aa"/><stop offset="1" stop-color="#e2acb6"/></linearGradient><filter id="bl" x="-5%" y="-5%" width="110%" height="110%"><feGaussianBlur stdDeviation="0.8"/></filter></defs><rect width="170" height="205" fill="url(#wall)"/><g filter="url(#bl)"><rect x="145" y="0" width="25" height="125" fill="#e6b6be"/><rect x="45" y="84" width="38" height="50" fill="#8c6c5a"/><rect x="47" y="100" width="35" height="2" fill="#6e5040"/><path d="M55 130L102 128L106 205L58 205Z" fill="#ece6e8"/><path d="M0 88C8 82 20 84 30 90C42 86 52 92 56 110C60 140 60 170 58 205H0Z" fill="#5e6a2a"/><path d="M20 96L38 92L46 150L40 205L24 205Z" fill="#343448"/><path d="M0 104L12 100L18 170L10 205H0Z" fill="#8a8a30"/><path d="M40 112L52 110L56 160L46 180Z" fill="#4a4a5a" opacity="0.8"/><path d="M30 120L40 118L42 150L34 160Z" fill="#a8a038" opacity="0.9"/><path d="M10 40C12 28 22 24 30 30C35 40 36 60 32 78C28 90 20 94 15 86C10 76 8 58 10 40Z" fill="#3e261c"/><path d="M10 34C14 22 28 20 33 32L33 44L11 46Z" fill="#1a1410"/><path d="M2 46C0 62 4 82 14 96L19 90C12 78 9 62 11 48Z" fill="#4e2e22"/><path d="M4 40C8 36 12 40 12 46L10 56L4 54Z" fill="#4e2e22"/><path d="M0 80L7 72L9 130L0 140Z" fill="#4a2c20"/><path d="M104 205L106 118C108 94 118 80 132 76C150 74 164 86 168 110L170 205Z" fill="#0e0c0e"/><path d="M101 118C98 140 100 160 104 178L114 172C112 150 112 130 116 108Z" fill="#8a5a44"/><path d="M124 76L133 96L142 78Z" fill="#8a5a44"/><path d="M119 44C119 26 128 16 139 18C150 22 154 40 151 60C148 74 140 80 131 78C123 74 119 60 119 44Z" fill="#9a6650"/><path d="M124 24C130 12 148 12 154 26C158 40 156 62 150 74L146 58L150 38C146 28 134 22 124 28Z" fill="#1a1210"/><path d="M118 42H142" stroke="#111" stroke-width="2"/></g><text x="140" y="22" font-family="Liberation Sans" font-size="10" font-weight="bold" fill="#e52020" textLength="15" lengthAdjust="spacingAndGlyphs">PSTV</text><text x="155.5" y="22" font-family="Liberation Sans" font-size="10" font-weight="bold" fill="#f4f4f4" textLength="11" lengthAdjust="spacingAndGlyphs">HD</text><rect x="0" y="152" width="170" height="5.5" fill="#e8742a"/><rect x="0" y="157.5" width="170" height="3.5" fill="#4a9ad0"/><rect x="34" y="161" width="136" height="18" fill="#142036"/><rect x="0" y="179" width="56" height="26" fill="#1c1610"/><path d="M128 179L150 179L162 205H134Z" fill="#6a4232"/><path d="M0 154H28L16 177H34" fill="none" stroke="#e8742a" stroke-width="3.2"/><path d="M27 158L16 176L30 199" fill="none" stroke="#5aa0d0" stroke-width="2"/><text x="35" y="171" font-family="Liberation Sans" font-size="6.5" font-weight="bold" fill="#eeeeee" textLength="47" lengthAdjust="spacingAndGlyphs">Gry LEOPARDS DE PAPSON</text><text x="95" y="171" font-family="Liberation Sans" font-size="6.5" font-weight="bold" fill="#eeeeee" textLength="67" lengthAdjust="spacingAndGlyphs">DANS : LES SECRETS 10 +243020710247</text></svg></div>
<svg class="a" style="left:1001px;top:333px" width="13" height="15" viewBox="0 0 13 15"><path d="M6.5 0.5L11 12H2Z" fill="#f08010"/><path d="M4 6H9M3 9H10" stroke="#fff" stroke-width="1.2"/><rect x="0.5" y="12" width="12" height="2.5" rx="1" fill="#f08010"/></svg>
<div class="t" style="left:1017.62px;top:335.47px;font-size:11.8px;line-height:11.8px;color:#6a6a6a;font-weight:normal;font-style:normal;transform:scaleX(0.7978);-webkit-text-stroke:0.15px #6a6a6a;">0 - PSTV HD...</div>
<div class="a" style="left:1098px;top:341px;width:9px;height:1px;background:#444"></div>
<div class="a" style="left:1135px;top:336px;width:9px;height:10px;border:1px solid #444;border-radius:1.5px"></div>
<svg class="a" style="left:1174px;top:336px" width="11" height="11"><path d="M0.5 0.5L10.5 10.5M10.5 0.5L0.5 10.5" stroke="#444" stroke-width="1"/></svg>
<div class="a" style="left:8.5px;top:778.5px;width:103.5px;height:19px;border:1px solid #a8a8a8;border-radius:2px;overflow:hidden;background:linear-gradient(#ececec 0%,#e2e2e2 52%,#d2d2d2 56%,#cacaca 100%)"><div class="a" style="left:0px;top:0;width:104px;height:100%;background:linear-gradient(#e8fce8 0%,#c4efc4 52%,#5cc65c 56%,#74d674 100%)"></div></div><div class="t" style="left:10.54px;top:783.15px;font-size:11px;line-height:11px;color:#0c200c;font-weight:normal;font-style:normal;transform:scaleX(0.8117);-webkit-text-stroke:0.45px #0c200c;">Present</div>
<div class="a" style="left:8.5px;top:802.5px;width:103.5px;height:19px;border:1px solid #a8a8a8;border-radius:2px;overflow:hidden;background:linear-gradient(#ececec 0%,#e2e2e2 52%,#d2d2d2 56%,#cacaca 100%)"><div class="a" style="left:0px;top:0;width:104px;height:100%;background:linear-gradient(#e8fce8 0%,#c4efc4 52%,#5cc65c 56%,#74d674 100%)"></div></div><div class="t" style="left:10.53px;top:806.90px;font-size:11px;line-height:11px;color:#0c200c;font-weight:normal;font-style:normal;transform:scaleX(0.8173);-webkit-text-stroke:0.45px #0c200c;">Lock</div>
<div class="a" style="left:115px;top:778.5px;width:483px;height:19px;border:1px solid #a8a8a8;border-radius:2px;overflow:hidden;background:linear-gradient(#ececec 0%,#e2e2e2 52%,#d2d2d2 56%,#cacaca 100%)"><div class="a" style="left:0px;top:0;width:48.5px;height:100%;background:linear-gradient(#fcecec 0%,#f4d6d6 52%,#e8b2b2 56%,#e2a6a6 100%)"></div><div class="a" style="left:48.5px;top:0;width:49px;height:100%;background:linear-gradient(#fffff0 0%,#fcfacc 52%,#ebe278 56%,#e4da6a 100%)"></div></div><div class="t" style="left:120.04px;top:783.15px;font-size:11px;line-height:11px;color:#1a1a1a;font-weight:normal;font-style:normal;transform:scaleX(0.8093);-webkit-text-stroke:0.45px #1a1a1a;">Level: 20%</div>
<div class="a" style="left:115px;top:802.5px;width:483px;height:19px;border:1px solid #a8a8a8;border-radius:2px;overflow:hidden;background:linear-gradient(#ececec 0%,#e2e2e2 52%,#d2d2d2 56%,#cacaca 100%)"><div class="a" style="left:0px;top:0;width:48.5px;height:100%;background:linear-gradient(#fcecec 0%,#f4d6d6 52%,#e8b2b2 56%,#e2a6a6 100%)"></div><div class="a" style="left:48.5px;top:0;width:193.5px;height:100%;background:linear-gradient(#fffff0 0%,#fcfacc 52%,#ebe278 56%,#e4da6a 100%)"></div><div class="a" style="left:242px;top:0;width:241px;height:100%;background:linear-gradient(#e8fce8 0%,#c4efc4 52%,#5cc65c 56%,#74d674 100%)"></div></div><div class="t" style="left:120.31px;top:806.90px;font-size:11px;line-height:11px;color:#1a1a1a;font-weight:normal;font-style:normal;transform:scaleX(0.8032);-webkit-text-stroke:0.45px #1a1a1a;">Quality: 100%</div>
<div class="a" style="left:602.5px;top:778.5px;width:483px;height:19px;border:1px solid #a8a8a8;border-radius:2px;overflow:hidden;background:linear-gradient(#ececec 0%,#e2e2e2 52%,#d2d2d2 56%,#cacaca 100%)"><div class="a" style="left:0px;top:0;width:104px;height:100%;background:linear-gradient(#fcecec 0%,#f4d6d6 52%,#e8b2b2 56%,#e2a6a6 100%)"></div><div class="a" style="left:104px;top:0;width:172px;height:100%;background:linear-gradient(#fffff0 0%,#fcfacc 52%,#ebe278 56%,#e4da6a 100%)"></div><div class="a" style="left:276px;top:0;width:207px;height:100%;background:linear-gradient(#e8fce8 0%,#c4efc4 52%,#5cc65c 56%,#74d674 100%)"></div></div><div class="t" style="left:604.52px;top:783.15px;font-size:11px;line-height:11px;color:#1a1a1a;font-weight:normal;font-style:normal;transform:scaleX(0.7671);-webkit-text-stroke:0.45px #1a1a1a;">BER: &lt;1.0E-7</div>
<div class="a" style="left:602.5px;top:802.5px;width:483px;height:19px;border:1px solid #a8a8a8;border-radius:2px;overflow:hidden;background:linear-gradient(#ececec 0%,#e2e2e2 52%,#d2d2d2 56%,#cacaca 100%)"><div class="a" style="left:0px;top:0;width:97px;height:100%;background:linear-gradient(#fcecec 0%,#f4d6d6 52%,#e8b2b2 56%,#e2a6a6 100%)"></div><div class="a" style="left:97px;top:0;width:5px;height:100%;background:linear-gradient(#fffff0 0%,#fcfacc 52%,#ebe278 56%,#e4da6a 100%)"></div></div><div class="t" style="left:606.74px;top:806.90px;font-size:11px;line-height:11px;color:#1a1a1a;font-weight:normal;font-style:normal;transform:scaleX(0.8327);-webkit-text-stroke:0.45px #1a1a1a;">SNR: 4,2 dB (Margin: 0,2 dB | Very Poor)</div>
<div class="a" style="left:1089.5px;top:778.5px;width:104px;height:19px;border:1px solid #a8a8a8;border-radius:2px;overflow:hidden;background:linear-gradient(#ececec 0%,#e2e2e2 52%,#d2d2d2 56%,#cacaca 100%)"><div class="a" style="left:0px;top:0;width:104px;height:100%;background:linear-gradient(#e8fce8 0%,#c4efc4 52%,#5cc65c 56%,#74d674 100%)"></div></div><div class="t" style="left:1091.55px;top:783.15px;font-size:11px;line-height:11px;color:#0c200c;font-weight:normal;font-style:normal;transform:scaleX(0.8574);-webkit-text-stroke:0.45px #0c200c;">Input (~21,3 Mbps)</div>
<div class="a" style="left:1089.5px;top:802.5px;width:104px;height:19px;border:1px solid #a8a8a8;border-radius:2px;overflow:hidden;background:linear-gradient(#ececec 0%,#e2e2e2 52%,#d2d2d2 56%,#cacaca 100%)"><div class="a" style="left:0px;top:0;width:104px;height:100%;background:linear-gradient(#e8fce8 0%,#c4efc4 52%,#5cc65c 56%,#74d674 100%)"></div></div><div class="t" style="left:1091.98px;top:806.90px;font-size:11px;line-height:11px;color:#0c200c;font-weight:normal;font-style:normal;transform:scaleX(0.7601);-webkit-text-stroke:0.45px #0c200c;">Sync TS</div>
<div class="a" style="left:0;top:827px;width:1200px;height:1px;background:#d6d6d6"></div>
<svg class="a" style="left:1190px;top:838px" width="10" height="12"><g fill="#9a9a9a"><rect x="7" y="1" width="1.5" height="1.5"/><rect x="4" y="4.5" width="1.5" height="1.5"/><rect x="7" y="4.5" width="1.5" height="1.5"/><rect x="1" y="8" width="1.5" height="1.5"/><rect x="4" y="8" width="1.5" height="1.5"/><rect x="7" y="8" width="1.5" height="1.5"/></g></svg>
<div class="a" style="left:393px;top:830px;width:1px;height:20px;background:#9a9a9a"></div>
<div class="a" style="left:793px;top:830px;width:1px;height:20px;background:#9a9a9a"></div>
<div class="a" style="left:1189px;top:830px;width:1px;height:20px;background:#9a9a9a"></div>
<div class="t" style="left:137.21px;top:834.73px;font-size:11.5px;line-height:11.5px;color:#1a1a1a;font-weight:normal;font-style:normal;transform:scaleX(0.8614);-webkit-text-stroke:0.45px #1a1a1a;">Locked -&gt; Uptime: 01:05:23</div>
<div class="t" style="left:526.24px;top:834.73px;font-size:11.5px;line-height:11.5px;color:#1a1a1a;font-weight:normal;font-style:normal;transform:scaleX(0.8079);-webkit-text-stroke:0.45px #1a1a1a;">SYNC 56 | TEI 62776 | CC 79729</div>
<div class="t" style="left:906.91px;top:834.73px;font-size:11.5px;line-height:11.5px;color:#1a1a1a;font-weight:normal;font-style:normal;transform:scaleX(0.8594);-webkit-text-stroke:0.45px #1a1a1a;">Best signal: 4,3 dB (2025-07-30 08:38)</div>
</body></html>
